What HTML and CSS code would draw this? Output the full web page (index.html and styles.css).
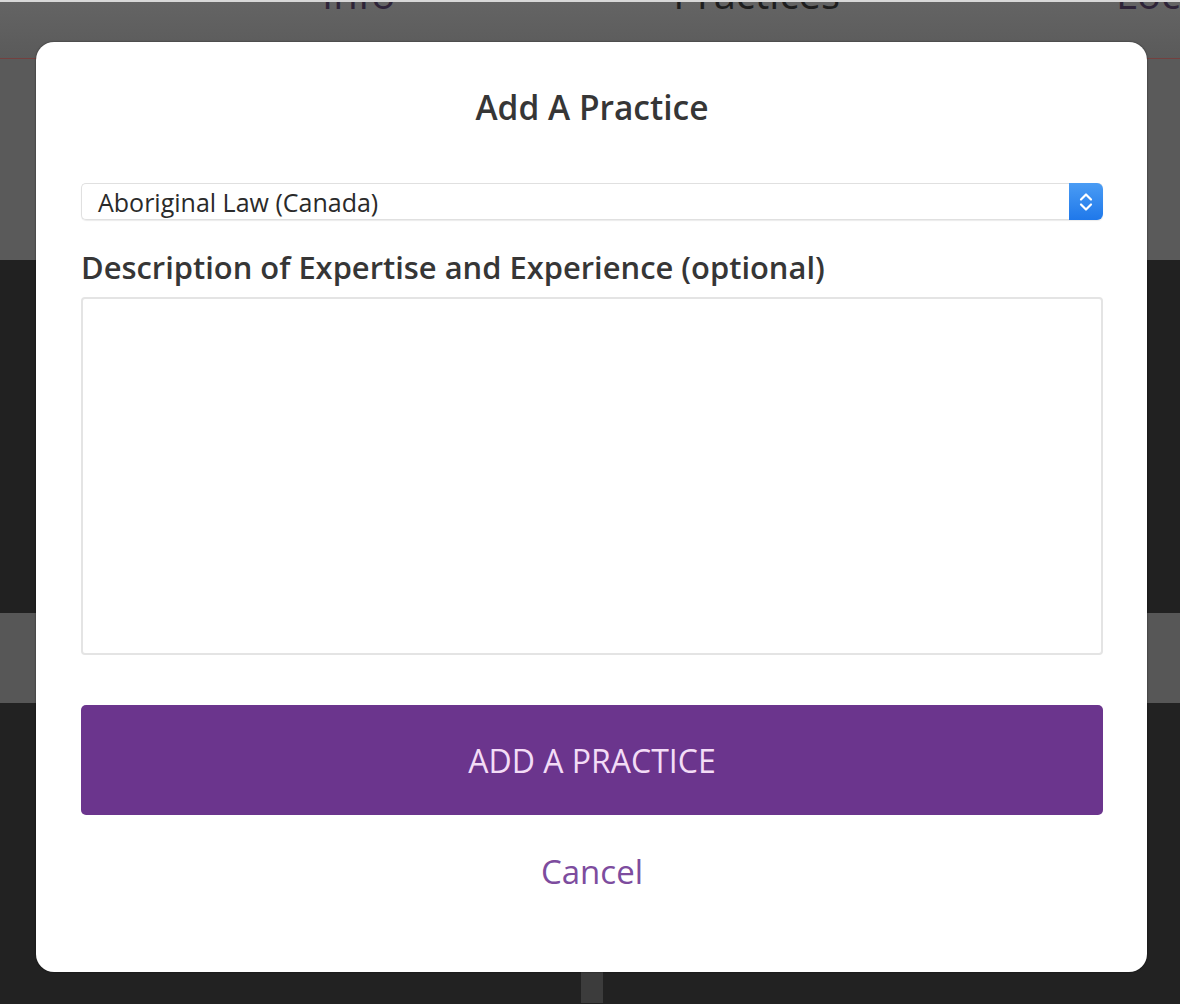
FILE: index.html
```html
<!DOCTYPE html>
<html lang="en">
<head>
<meta charset="utf-8">
<title>Add A Practice</title>
<link rel="stylesheet" href="styles.css">
</head>
<body>
<div class="page">
  <div class="topbar">
    <div class="tabs">
      <span class="tab tab-info">Info</span>
      <span class="tab tab-practices">Practices</span>
      <span class="tab tab-loc">Locations</span>
    </div>
  </div>
  <div class="redline"></div>
  <div class="section gray-a"></div>
  <div class="section dark-a"></div>
  <div class="section gray-b"></div>
  <div class="section dark-b"><div class="divider"></div></div>
</div>

<div class="modal">
  <h1 class="title">Add A Practice</h1>
  <div class="select">
    <span class="select-text">Aboriginal Law (Canada)</span>
    <span class="stepper">
      <svg width="16" height="28" viewBox="0 0 16 28" aria-hidden="true">
        <path d="M3 11.5 L8 6.5 L13 11.5" fill="none" stroke="#fff" stroke-width="2.2" stroke-linecap="round" stroke-linejoin="round"/>
        <path d="M3 16.5 L8 21.5 L13 16.5" fill="none" stroke="#fff" stroke-width="2.2" stroke-linecap="round" stroke-linejoin="round"/>
      </svg>
    </span>
  </div>
  <label class="label">Description of Expertise and Experience (optional)</label>
  <div class="textarea"></div>
  <div class="button">ADD A PRACTICE</div>
  <div class="cancel">Cancel</div>
</div>
</body>
</html>
```
FILE: styles.css
```css
* { box-sizing: border-box; }
html, body { margin: 0; padding: 0; }
body {
  width: 1180px;
  height: 1004px;
  overflow: hidden;
  position: relative;
  font-family: "Open Sans", "Liberation Sans", sans-serif;
  background: #222;
}
.page { width: 1180px; }
.topbar {
  height: 58px;
  background: linear-gradient(#646464, #5a5a5a);
  border-top: 2px solid #d8d8d8;
}
.tabs {
  height: 12px;
  overflow: hidden;
  display: flex;
  align-items: flex-end;
}
.tab {
  font-size: 40px;
  line-height: 40px;
  flex: none;
  white-space: nowrap;
}
.tab-info { margin-left: 322px; color: #2e2438; }
.tab-practices { margin-left: 278px; color: #1e1e1e; }
.tab-loc { margin-left: 276px; color: #2e2438; }
.redline { height: 1px; background: #74403f; }
.section { width: 100%; }
.gray-a { height: 201px; background: #5a5a5a; }
.dark-a { height: 353px; background: #212121; }
.gray-b { height: 90px; background: #575757; }
.dark-b { height: 300px; background: #222; display: flex; justify-content: center; }
.divider { width: 22px; height: 100%; background: #3c3c3c; margin-left: 4px; }

.modal {
  position: absolute;
  left: 36px;
  top: 42px;
  width: 1111px;
  height: 930px;
  background: #fff;
  border-radius: 18px;
  box-shadow: 0 0 2px rgba(0, 0, 0, 0.6);
  padding: 45px 44px 0 45px;
  display: flex;
  flex-direction: column;
}
.title {
  margin: 0;
  font-size: 33.5px;
  line-height: 40px;
  font-weight: 600;
  color: #363636;
  text-align: center;
}
.select {
  margin-top: 56px;
  height: 37px;
  display: flex;
  align-items: stretch;
  border: 1px solid #e0e0e0;
  border-right: none;
  border-radius: 5px;
  box-shadow: 0 1px 1px rgba(0, 0, 0, 0.08);
}
.select-text {
  flex: 1;
  display: flex;
  align-items: center;
  padding-left: 16px;
  font-size: 25px;
  color: #2a2a2a;
}
.stepper {
  width: 34px;
  margin: -1px 0;
  border-radius: 0 6px 6px 0;
  background: linear-gradient(#4a9cf4, #1f78ea);
  display: flex;
  align-items: center;
  justify-content: center;
}
.label {
  display: block;
  margin-top: 29px;
  font-size: 30.9px;
  line-height: 36px;
  font-weight: 600;
  color: #363636;
}
.textarea {
  margin-top: 12px;
  height: 358px;
  border: 2px solid #e4e4e4;
  border-radius: 4px;
}
.button {
  margin-top: 50px;
  height: 110px;
  border-radius: 5px;
  background: #6b358d;
  color: #f3dcf6;
  font-size: 32px;
  display: flex;
  align-items: center;
  justify-content: center;
}
.cancel {
  margin-top: 37px;
  line-height: 40px;
  text-align: center;
  font-size: 33px;
  color: #7d4c9e;
}
```
